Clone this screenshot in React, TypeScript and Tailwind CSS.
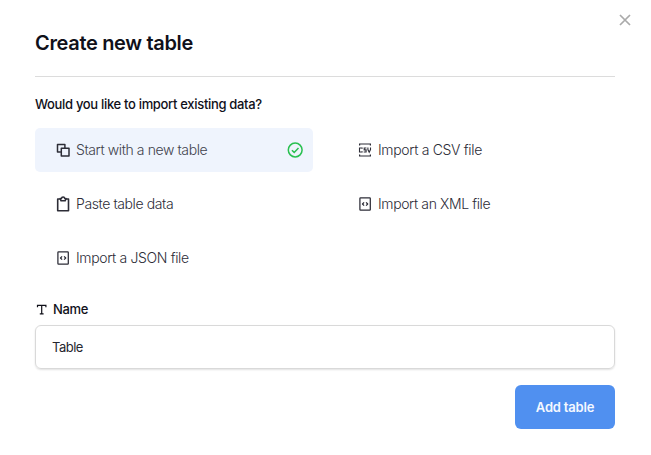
import type { ReactNode } from 'react';

const CopyIcon = () => (
  <svg width="14" height="14" viewBox="0 0 14 14" fill="none" stroke="currentColor" strokeWidth="1.5" strokeLinejoin="round">
    <path d="M4.9 8.9H1.5V1.5H8.9V4.9" />
    <rect x="5.3" y="5.3" width="7.7" height="7.7" />
  </svg>
);

const ClipboardIcon = () => (
  <svg width="14" height="16" viewBox="0 0 14 16" fill="none" stroke="currentColor" strokeWidth="1.6" strokeLinejoin="round">
    <path d="M4.2 3H1.7V14.7H12.5V3H10" />
    <path d="M4.2 2.5H5.5C5.7 0.4 8.5 0.4 8.7 2.5H10L9.2 4.7H5Z" />
  </svg>
);

const CodeFileIcon = () => (
  <svg width="14" height="14" viewBox="0 0 14 14" fill="none" stroke="currentColor" strokeWidth="1.25" strokeLinejoin="round">
    <rect x="1.9" y="0.9" width="10.4" height="12.2" rx="0.6" />
    <path d="M6.1 5.4L4.5 7L6.1 8.6M8.1 5.4L9.7 7L8.1 8.6" />
  </svg>
);

const CsvIcon = () => (
  <svg width="14" height="14" viewBox="0 0 14 14" fill="none" stroke="currentColor" strokeWidth="1.2">
    <path d="M1.6 2.6V1H12.4V2.6M1.6 11.4V13H12.4V11.4" />
    <path d="M4.1 5.7V5H1.5V9H4.1V8.3M8.4 5H6.2V6.9H8.1V9H5.7M9.9 4.4V6.6L11.2 9.2L12.5 6.6V4.4" strokeWidth="1.1" />
  </svg>
);

type OptionProps = { icon: ReactNode; label: string; spacing: string; selected?: boolean };

const Option = ({ icon, label, spacing, selected }: OptionProps) => (
  <button
    className={`flex h-11 items-center rounded-[5px] pr-[10px] pl-[21px] text-left text-[14px] font-light ${
      selected ? 'bg-[#eff4fd] text-[#41424c]' : 'text-[#2d2d38]'
    }`}
  >
    <span className="mr-[6px] flex w-[14px] justify-center text-[#2d2d37]">{icon}</span>
    <span className={`pb-[2px] ${spacing}`}>{label}</span>
    {selected && (
      <svg className="ml-auto" width="16" height="16" viewBox="0 0 16 16" fill="none" stroke="#29c050" strokeWidth="1.5">
        <circle cx="8.2" cy="8" r="6.9" />
        <path d="M4.9 8.2L7.2 10.4L11.5 6" />
      </svg>
    )}
  </button>
);

export default function App() {
  return (
    <main className="h-[455px] w-[651px] bg-white font-['Inter','Liberation_Sans',sans-serif] text-[#101019]">
      <div className="flex h-7 items-end justify-end pr-[20px]">
        <button aria-label="Close" className="mb-[2px]">
          <svg width="12" height="12" viewBox="0 0 12 12" fill="none" stroke="#aaaaaa" strokeWidth="1.7">
            <path d="M1 1L11 11M11 1L1 11" />
          </svg>
        </button>
      </div>
      <div className="flex flex-col pr-9 pl-[35px]">
        <h1 className="flex h-[49px] items-start border-b border-[#dcdcdc] text-[20px] leading-[30px] font-semibold tracking-[-0.33px]">
          Create new table
        </h1>
        <p className="mt-[17px] text-[13px] leading-[21px] font-medium tracking-[-0.32px]">Would you like to import existing data?</p>
        <div className="mt-[13px] grid grid-cols-2 gap-x-6 gap-y-[10px]">
          <Option selected icon={<CopyIcon />} label="Start with a new table" spacing="tracking-[-0.4px]" />
          <Option icon={<CsvIcon />} label="Import a CSV file" spacing="tracking-[-0.32px]" />
          <Option icon={<ClipboardIcon />} label="Paste table data" spacing="tracking-[-0.4px]" />
          <Option icon={<CodeFileIcon />} label="Import an XML file" spacing="tracking-[-0.38px]" />
          <Option icon={<CodeFileIcon />} label="Import a JSON file" spacing="tracking-[-0.35px]" />
        </div>
        <label htmlFor="name" className="mt-[19px] flex h-[21px] items-center text-[13px] font-medium tracking-[-0.35px]">
          <svg className="mr-[6px] ml-px" width="11" height="11" viewBox="0 0 11 11" fill="none" stroke="currentColor" strokeWidth="1.2">
            <path d="M1.5 3.3V1.4H9.9V3.3M5.7 1.4V9.8M3.8 9.8H7.6" />
          </svg>
          Name
        </label>
        <input
          id="name"
          defaultValue="Table"
          className="mt-[5px] h-11 rounded-[6px] border border-[#d9d9d9] px-4 text-[13px] tracking-[-0.5px] text-[#26262e] shadow-[0_1px_2px_rgba(0,0,0,0.12)] outline-none"
        />
        <button className="mt-4 h-11 w-[100px] self-end rounded-[6px] bg-[#5090f0] pt-px text-[13px] font-semibold tracking-[-0.2px] text-[#f5f8ff]">
          Add table
        </button>
      </div>
    </main>
  );
}
